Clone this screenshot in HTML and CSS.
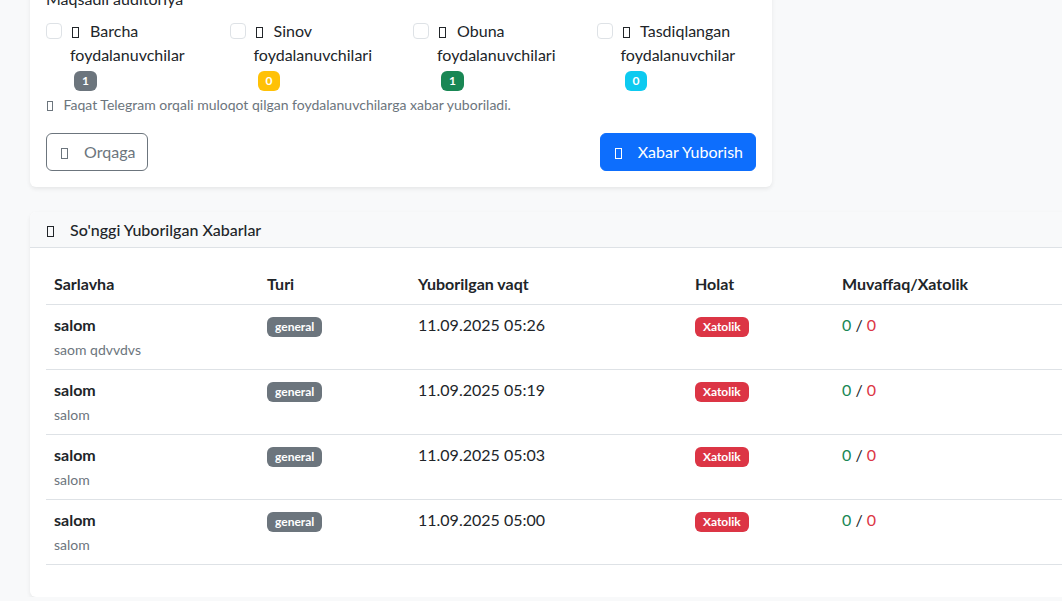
FILE: index.html
```html
<!DOCTYPE html>
<html lang="uz">
<head>
<meta charset="utf-8">
<title>Xabar yuborish</title>
<link rel="stylesheet" href="styles.css">
</head>
<body>
<div class="page">
  <div class="card card-form">
    <div class="card-body">
      <div class="form-label">Maqsadli auditoriya</div>
      <div class="audience">
        <div class="form-check">
          <span class="check"></span>
          <label><span class="ico"></span> Barcha foydalanuvchilar <span class="badge bg-secondary">1</span></label>
        </div>
        <div class="form-check">
          <span class="check"></span>
          <label><span class="ico"></span> Sinov foydalanuvchilari <span class="badge bg-warning">0</span></label>
        </div>
        <div class="form-check">
          <span class="check"></span>
          <label><span class="ico"></span> Obuna foydalanuvchilari <span class="badge bg-success">1</span></label>
        </div>
        <div class="form-check">
          <span class="check"></span>
          <label><span class="ico"></span> Tasdiqlangan foydalanuvchilar <span class="badge bg-info">0</span></label>
        </div>
      </div>
      <div class="form-text"><span class="ico ico-sm"></span> Faqat Telegram orqali muloqot qilgan foydalanuvchilarga xabar yuboriladi.</div>
      <div class="actions">
        <button class="btn btn-outline"><span class="ico ico-btn"></span> Orqaga</button>
        <button class="btn btn-primary"><span class="ico ico-btn"></span> Xabar Yuborish</button>
      </div>
    </div>
  </div>

  <div class="card card-list">
    <div class="card-header"><span class="ico ico-head"></span> So'nggi Yuborilgan Xabarlar</div>
    <div class="card-body">
      <table class="table">
        <thead>
          <tr>
            <th class="c1">Sarlavha</th>
            <th class="c2">Turi</th>
            <th class="c3">Yuborilgan vaqt</th>
            <th class="c4">Holat</th>
            <th class="c5">Muvaffaq/Xatolik</th>
          </tr>
        </thead>
        <tbody>
          <tr>
            <td><strong>salom</strong><br><small class="muted">saom qdvvdvs</small></td>
            <td><span class="badge bg-secondary">general</span></td>
            <td>11.09.2025 05:26</td>
            <td><span class="badge bg-danger">Xatolik</span></td>
            <td><span class="ok">0</span> / <span class="fail">0</span></td>
          </tr>
          <tr>
            <td><strong>salom</strong><br><small class="muted">salom</small></td>
            <td><span class="badge bg-secondary">general</span></td>
            <td>11.09.2025 05:19</td>
            <td><span class="badge bg-danger">Xatolik</span></td>
            <td><span class="ok">0</span> / <span class="fail">0</span></td>
          </tr>
          <tr>
            <td><strong>salom</strong><br><small class="muted">salom</small></td>
            <td><span class="badge bg-secondary">general</span></td>
            <td>11.09.2025 05:03</td>
            <td><span class="badge bg-danger">Xatolik</span></td>
            <td><span class="ok">0</span> / <span class="fail">0</span></td>
          </tr>
          <tr>
            <td><strong>salom</strong><br><small class="muted">salom</small></td>
            <td><span class="badge bg-secondary">general</span></td>
            <td>11.09.2025 05:00</td>
            <td><span class="badge bg-danger">Xatolik</span></td>
            <td><span class="ok">0</span> / <span class="fail">0</span></td>
          </tr>
        </tbody>
      </table>
    </div>
  </div>
</div>
</body>
</html>
```

FILE: styles.css
```css
html, body {
  margin: 0;
  padding: 0;
  overflow: hidden;
}
body {
  background: #f8f9fa;
  font-family: Lato, "Noto Sans", sans-serif;
  font-size: 16px;
  line-height: 1.5;
  color: #212529;
}
.page {
  margin-top: -29px;
  padding-left: 30px;
  width: 1125px;
}
.card {
  background: #fff;
  border-radius: 6px;
  box-shadow: 0 2px 4px rgba(0, 0, 0, 0.075);
  overflow: hidden;
}
.card-form {
  width: 742px;
  margin-bottom: 25px;
}
.card-list {
  width: 1125px;
}
.card-body {
  padding: 16px;
}
.form-label {
  margin-bottom: 8px;
}
.audience {
  display: grid;
  grid-template-columns: repeat(4, 1fr);
  column-gap: 24px;
}
.form-check {
  position: relative;
  padding-left: 24px;
  min-height: 24px;
}
.check {
  position: absolute;
  left: 0;
  top: 4px;
  width: 16px;
  height: 16px;
  box-sizing: border-box;
  border: 1px solid #dee2e6;
  border-radius: 4px;
  background: #fff;
}
.ico {
  display: inline-block;
  width: 7px;
  height: 11px;
  box-sizing: border-box;
  border: 1px solid currentColor;
  margin: 0 7px 0 2px;
  vertical-align: -1px;
}
.ico-sm {
  width: 6px;
  height: 10px;
  margin-left: 1px;
}
.ico-btn {
  margin: 0 12px 0 2px;
}
.ico-head {
  margin: 0 12px 0 1px;
}
.badge {
  display: inline-block;
  padding: 4px 8px;
  font-size: 12px;
  font-weight: 700;
  line-height: 1;
  color: #fff;
  border-radius: 6px;
  vertical-align: baseline;
  margin-left: 4px;
}
td .badge {
  margin-left: 0;
}
.bg-secondary { background: #6c757d; }
.bg-warning { background: #ffc107; }
.bg-success { background: #198754; }
.bg-info { background: #0dcaf0; }
.bg-danger { background: #dc3545; }
.form-text {
  margin-top: 3px;
  font-size: 14px;
  color: #6c757d;
}
.actions {
  display: flex;
  justify-content: space-between;
  margin-top: 18px;
}
.btn {
  font-family: inherit;
  font-size: 16px;
  line-height: 24px;
  padding: 6px 12px;
  border-radius: 6px;
  border: 1px solid transparent;
  background: none;
}
.btn-outline {
  color: #6c757d;
  border-color: #6c757d;
}
.btn-primary {
  color: #fff;
  background: #0d6efd;
  border-color: #0d6efd;
}
.card-header {
  padding: 8px 16px;
  font-size: 16px;
  line-height: 1.2;
  font-weight: 500;
  background: #f8f9fa;
  border-bottom: 1px solid #dee2e6;
}
.table {
  width: 100%;
  border-collapse: collapse;
  margin-bottom: 16px;
}
.table th, .table td {
  text-align: left;
  vertical-align: top;
  padding: 8px;
  border-bottom: 1px solid #dee2e6;
}
.table th {
  font-weight: 700;
}
.c1 { width: 197px; }
.c2 { width: 135px; }
.c3 { width: 261px; }
.c4 { width: 131px; }
.muted {
  font-size: 14px;
  color: #6c757d;
}
.ok { color: #198754; }
.fail { color: #dc3545; }
```
